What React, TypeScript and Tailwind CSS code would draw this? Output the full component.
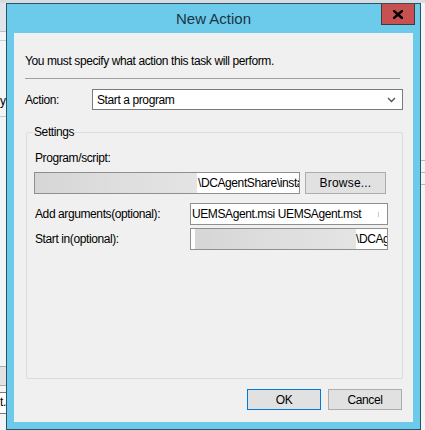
import React from 'react'

const font = { fontFamily: '"Liberation Sans", Arial, sans-serif' }

function Blur({ className }: { className: string }) {
  return <div className={`h-full bg-gradient-to-r from-[#d6d6d6] via-[#dedede] to-[#e4e4e4] ${className}`} />
}

export default function App() {
  return (
    <div
      className="relative w-[425px] h-[430px] overflow-hidden bg-[#f3f4f5] text-[12px] tracking-[-0.4px] text-black"
      style={font}
    >
      {/* window behind the dialog */}
      <div className="absolute left-0 top-0 w-full h-[3px] bg-[#d5dde2]" />
      <div className="absolute left-0 top-[3px] w-[7px] h-[28px] bg-[#dfe5e8]" />
      <div className="absolute left-0 top-[31px] w-[7px] h-px bg-[#b9c2c8]" />
      <div className="absolute left-0 top-[40px] w-[7px] h-px bg-[#c9cfd3]" />
      <div className="absolute left-0 top-[95px] text-[12px] leading-none">y</div>
      <div className="absolute left-0 top-[116px] w-[7px] h-px bg-[#c8c8c8]" />
      <div className="absolute left-0 top-[366px] w-[7px] h-[20px] bg-[#e2e2e2] border-y border-[#adadad]" />
      <div className="absolute left-0 top-[392px] w-[7px] h-[22px] border-y border-r border-[#7a7a7a] bg-white pt-[3px] text-[12px] leading-none">t.</div>
      <div className="absolute right-0 top-[160px] w-[5px] h-px bg-[#b8b8b8]" />
      <div className="absolute right-0 top-[172px] w-[5px] h-px bg-[#b8b8b8]" />
      <div className="absolute right-0 top-[184px] w-[5px] h-px bg-[#b8b8b8]" />

      {/* dialog */}
      <div className="absolute left-[6px] top-[3px] w-[415px] h-[427px] border border-[#2f5161] bg-[#6ccbea] flex flex-col">
        <div className="relative h-[29px] flex items-center justify-center">
          <span className="text-[15px] tracking-normal text-[#1b3544] mt-[1px]">New Action</span>
          <div className="absolute right-[5px] top-0 w-[34px] h-[21px] bg-[#c75050] border border-[#3c3c3c] border-t-0 flex items-center justify-center">
            <svg width="10" height="9" viewBox="0 0 10 9">
              <path d="M1 1 L9 8 M9 1 L1 8" stroke="#000" strokeWidth="2.4" strokeLinecap="square" />
            </svg>
          </div>
        </div>

        <div className="mx-[7px] mb-[7px] flex-1 bg-[#f0f0f0] flex flex-col">
          <p className="pt-[20px] pl-[11px] leading-[16px]">You must specify what action this task will perform.</p>
          <div className="mt-[9px] ml-[11px] mr-[13px] h-px bg-[#a0a0a0]" />

          <div className="mt-[10px] flex items-center">
            <span className="w-[78px] pl-[11px]">Action:</span>
            <div className="w-[311px] h-[21px] border border-[#7a7a7a] bg-white flex items-center justify-between pl-[4px] pr-[6px]">
              <span>Start a program</span>
              <svg width="9" height="6" viewBox="0 0 9 6">
                <path d="M1 1 L4.5 4.5 L8 1" stroke="#555" strokeWidth="1.4" fill="none" />
              </svg>
            </div>
          </div>

          {/* Settings group */}
          <div className="relative mt-[22px] ml-[12px] w-[377px] h-[247px] border border-[#dcdcdc] rounded-[2px] pl-[7px] pt-[17px]">
            <span className="absolute left-[6px] top-[-9px] px-[1px] bg-[#f0f0f0] leading-[16px]">Settings</span>
            <div className="ml-[1px] leading-[16px]">Program/script:</div>
            <div className="mt-[6px] flex">
              <div className="w-[266px] h-[22px] border border-[#8e8f8f] bg-white flex overflow-hidden">
                <Blur className="w-[162px] shrink-0" />
                <span className="pl-[1px] leading-[20px] whitespace-nowrap">\DCAgentShare\install</span>
              </div>
              <button className="ml-[5px] w-[81px] h-[22px] border border-[#adadad] bg-[#e1e1e1] tracking-[0.2px]">
                Browse...
              </button>
            </div>

            <div className="mt-[9px] flex items-center">
              <span className="w-[156px] pl-[1px]">Add arguments(optional):</span>
              <div className="relative w-[198px] h-[22px] border border-[#8e8f8f] bg-white pl-[1px] leading-[20px] whitespace-nowrap overflow-hidden">
                UEMSAgent.msi UEMSAgent.mst
                <div className="absolute right-[8px] top-[8px] w-px h-[5px] bg-[#c8c8c8]" />
              </div>
            </div>

            <div className="mt-[3px] flex items-center">
              <span className="w-[156px] pl-[1px]">Start in(optional):</span>
              <div className="w-[198px] h-[22px] border border-[#8e8f8f] bg-white flex overflow-hidden">
                <div className="w-[4px] shrink-0" />
                <Blur className="w-[161px] shrink-0" />
                <span className="leading-[20px] whitespace-nowrap">\DCAgentShare</span>
              </div>
            </div>
          </div>

          <div className="mt-[10px] pr-[11px] flex justify-end gap-[7px]">
            <button className="w-[74px] h-[21px] border border-[#0078d7] bg-[#e1e1e1]">OK</button>
            <button className="w-[74px] h-[21px] border border-[#adadad] bg-[#e1e1e1]">Cancel</button>
          </div>
        </div>
      </div>
    </div>
  )
}
